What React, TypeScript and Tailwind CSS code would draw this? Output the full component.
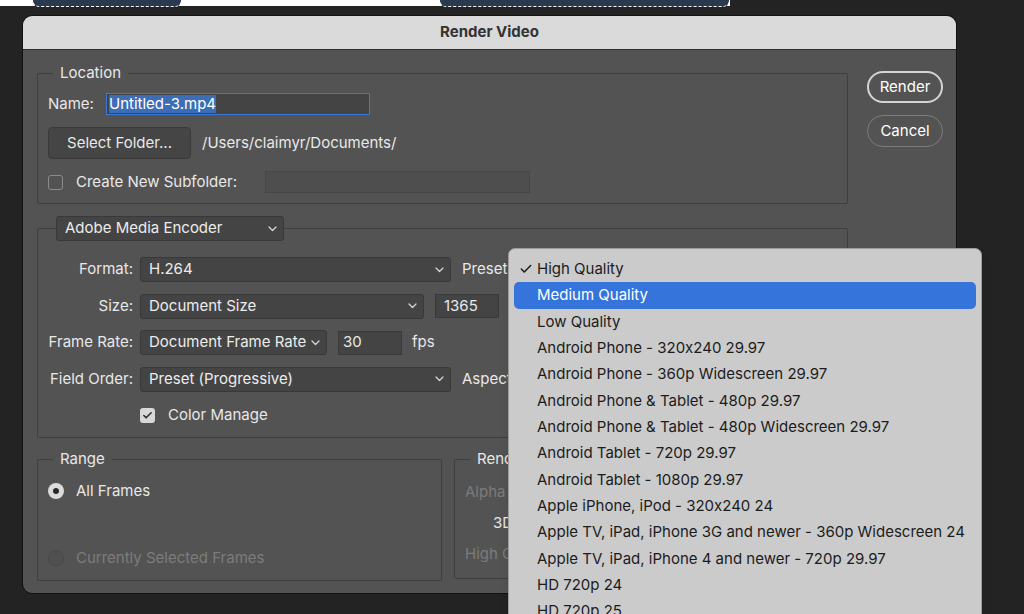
import { Check } from "lucide-react";

const Chevron = () => (
  <svg width="9" height="6" viewBox="0 0 9 6" className="shrink-0">
    <path d="M1 1 L4.5 4.5 L8 1" fill="none" stroke="#d6d6d6" strokeWidth="1.3" strokeLinecap="round" strokeLinejoin="round" />
  </svg>
);

const Select = ({ value, w }: { value: string; w: string }) => (
  <div className={`${w} h-[25px] flex items-center justify-between pl-[8px] pr-[6px] bg-[#444444] border border-[#393939] rounded-[3px] text-[#ececec]`}>
    <span className="whitespace-nowrap">{value}</span>
    <Chevron />
  </div>
);

const presets = [
  "High Quality",
  "Medium Quality",
  "Low Quality",
  "Android Phone - 320x240 29.97",
  "Android Phone - 360p Widescreen 29.97",
  "Android Phone & Tablet - 480p 29.97",
  "Android Phone & Tablet - 480p Widescreen 29.97",
  "Android Tablet - 720p 29.97",
  "Android Tablet - 1080p 29.97",
  "Apple iPhone, iPod - 320x240 24",
  "Apple TV, iPad, iPhone 3G and newer - 360p Widescreen 24",
  "Apple TV, iPad, iPhone 4 and newer - 720p 29.97",
  "HD 720p 24",
  "HD 720p 25",
];

export default function App() {
  return (
    <div className="relative w-[1024px] h-[614px] overflow-hidden bg-[#232323] text-[15px] font-['Inter','Noto_Sans',sans-serif] [font-feature-settings:'calt'_0]">
      {/* strip of the window behind */}
      <div className="flex h-[6px] w-[730px] bg-white">
        <div className="ml-[33px] w-[148px] h-[7px] bg-[#2a3a4e] rounded-b-[6px] border-b border-dashed border-white" />
        <div className="ml-[259px] w-[289px] h-[7px] bg-[#2a3a4e] rounded-b-[6px] border-b border-dashed border-white" />
      </div>

      {/* dialog */}
      <div className="mt-[9px] ml-[22px] w-[935px] h-[579px] rounded-[10px] overflow-hidden border border-[#111] flex flex-col">
        <div className="h-[34px] shrink-0 bg-[#dadada] border-b border-[#2c2c2c] flex items-center justify-center font-bold text-[#333]">
          Render Video
        </div>

        <div className="flex-1 bg-[#535353] flex pl-[14px] pt-[13px] text-[#e8e8e8]">
          <div className="w-[811px] flex flex-col">
            {/* Location */}
            <fieldset className="border border-[#3f3f3f] rounded-[2px] pl-[10px] pb-[10px]">
              <legend className="ml-[5px] px-[7px] leading-[20px]">Location</legend>
              <div className="mt-[10px] flex items-center h-[22px]">
                <span className="w-[58px]">Name:</span>
                <div className="w-[264px] h-[22px] bg-[#444444] border border-[#3a78d8] flex items-center pl-[2px]">
                  <span className="bg-[#3c6db5] text-white leading-[18px]">Untitled-3.mp4</span>
                </div>
              </div>
              <div className="mt-[12px] flex items-center gap-[11px]">
                <div className="w-[143px] h-[32px] bg-[#454545] border border-[#3a3a3a] rounded-[4px] flex items-center justify-center">
                  Select Folder...
                </div>
                <span>/Users/claimyr/Documents/</span>
              </div>
              <div className="mt-[12px] flex items-center h-[22px]">
                <div className="w-[15px] h-[15px] rounded-[3px] border border-[#8c8c8c]" />
                <span className="ml-[13px] w-[189px]">Create New Subfolder:</span>
                <div className="w-[265px] h-[22px] bg-[#4e4e4e] border border-[#474747]" />
              </div>
            </fieldset>

            {/* Encoder */}
            <fieldset className="mt-[12px] border border-[#3f3f3f] rounded-[2px] pl-[10px] pb-[9px]">
              <legend className="ml-[8px]">
                <Select value="Adobe Media Encoder" w="w-[228px]" />
              </legend>
              <div className="mt-[16px] flex flex-col gap-[11.5px]">
                <div className="flex items-center h-[25px]">
                  <span className="w-[85px] text-right">Format:</span>
                  <div className="ml-[7px]"><Select value="H.264" w="w-[311px]" /></div>
                  <span className="ml-[11px]">Preset:</span>
                </div>
                <div className="flex items-center h-[25px]">
                  <span className="w-[85px] text-right">Size:</span>
                  <div className="ml-[7px]"><Select value="Document Size" w="w-[284px]" /></div>
                  <div className="ml-[11px] w-[64px] h-[24px] bg-[#444444] border border-[#3a3a3a] pl-[8px] flex items-center">1365</div>
                </div>
                <div className="flex items-center h-[25px]">
                  <span className="w-[85px] text-right whitespace-nowrap">Frame Rate:</span>
                  <div className="ml-[7px]"><Select value="Document Frame Rate" w="w-[187px]" /></div>
                  <div className="ml-[11px] w-[64px] h-[24px] bg-[#444444] border border-[#3a3a3a] pl-[4px] flex items-center">30</div>
                  <span className="ml-[10px]">fps</span>
                </div>
                <div className="flex items-center h-[25px]">
                  <span className="w-[85px] text-right whitespace-nowrap">Field Order:</span>
                  <div className="ml-[7px]"><Select value="Preset (Progressive)" w="w-[311px]" /></div>
                  <span className="ml-[11px]">Aspect:</span>
                </div>
                <div className="flex items-center h-[25px]">
                  <div className="ml-[92px] w-[15px] h-[15px] rounded-[3px] bg-[#d8d8d8] flex items-center justify-center">
                    <Check size={11} strokeWidth={3.5} color="#2e2e2e" />
                  </div>
                  <span className="ml-[13px]">Color Manage</span>
                </div>
              </div>
            </fieldset>

            {/* Range + Render */}
            <div className="mt-[11px] flex gap-[12px]">
              <fieldset className="w-[405px] h-[132px] border border-[#3f3f3f] rounded-[2px] pl-[10px]">
                <legend className="ml-[5px] px-[7px] leading-[20px]">Range</legend>
                <div className="mt-[12px] flex items-center h-[20px]">
                  <div className="w-[16px] h-[16px] rounded-full bg-[#dcdcdc] flex items-center justify-center">
                    <div className="w-[6px] h-[6px] rounded-full bg-[#2a2a2a]" />
                  </div>
                  <span className="ml-[12px]">All Frames</span>
                </div>
                <div className="mt-[47px] flex items-center h-[20px] text-[#7c7c7c]">
                  <div className="w-[16px] h-[16px] rounded-full bg-[#505050] border border-[#494949]" />
                  <span className="ml-[12px]">Currently Selected Frames</span>
                </div>
              </fieldset>
              <fieldset className="flex-1 h-[130px] border border-[#3f3f3f] rounded-[2px] pl-[10px]">
                <legend className="ml-[5px] px-[7px] leading-[20px]">Rendering</legend>
                <div className="mt-[12px] h-[20px] text-[#7c7c7c]">Alpha Channel:</div>
                <div className="mt-[11px] h-[20px] pl-[28px]">3D Artwork:</div>
                <div className="mt-[11px] h-[20px] text-[#7c7c7c]">High Quality 3D</div>
              </fieldset>
            </div>
          </div>

          {/* buttons */}
          <div className="ml-[19px] mt-[8px] flex flex-col gap-[12px]">
            <div className="w-[76px] h-[32px] rounded-full border-2 border-[#d4d4d4] flex items-center justify-center text-white">
              Render
            </div>
            <div className="w-[76px] h-[32px] rounded-full border border-[#7c7c7c] flex items-center justify-center text-white">
              Cancel
            </div>
          </div>
        </div>
      </div>

      {/* open preset menu */}
      <div className="absolute left-[508px] top-[248px] w-[474px] h-[380px] bg-[#cbcbcb] border border-[#9c9c9c] rounded-[7px] shadow-lg pt-[7px] px-[5px] text-[#1c1c1c]">
        {presets.map((p, i) => (
          <div
            key={p}
            className={`h-[26.35px] flex items-center rounded-[5px] pl-[23px] relative ${i === 1 ? "bg-[#3574da] text-white" : ""}`}
          >
            {i === 0 && (
              <span className="absolute left-[5px] top-[6px]">
                <Check size={14} strokeWidth={2.6} color="#1c1c1c" />
              </span>
            )}
            {p}
          </div>
        ))}
      </div>
    </div>
  );
}
